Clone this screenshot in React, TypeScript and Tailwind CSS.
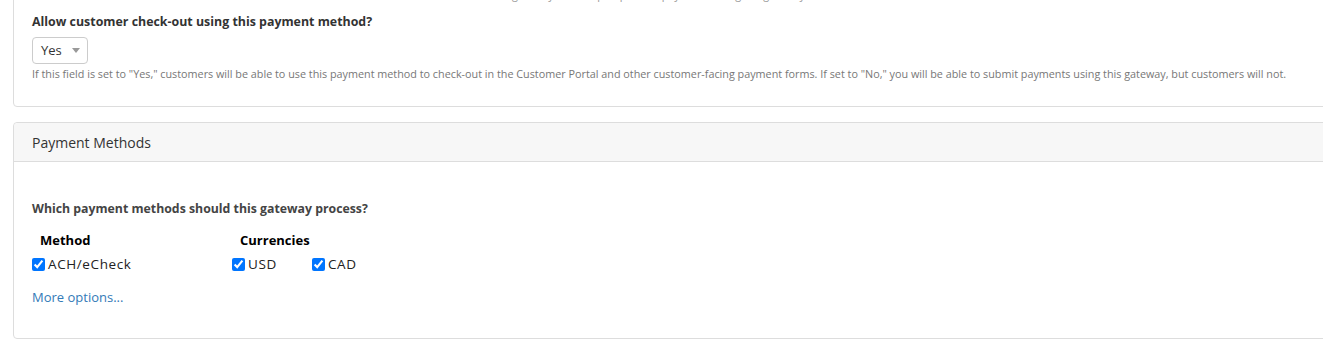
import React from "react";

export default function App() {
  return (
    <div
      className="w-[1323px] h-[339px] overflow-hidden bg-white text-[#333]"
      style={{ fontFamily: "'Open Sans', Lato, sans-serif" }}
    >
      <div className="ml-[13px] w-[1330px]">
        {/* Panel 1 */}
        <div className="-mt-[20px] border border-[#ddd] rounded-[4px] pl-[18px] pb-[25px]">
          <div className="h-[33px] pt-[8px] text-[10.8px] text-[#999] leading-[12px] pl-[480px] whitespace-nowrap">
            gateway are setup to process payments using the gateway
          </div>
          <div className="text-[12.4px] font-bold leading-[16px] text-[#333]">
            Allow customer check-out using this payment method?
          </div>
          <div className="mt-[7px] flex items-center justify-between w-[56px] h-[27px] border border-[#ccc] rounded-[4px] pl-[8px] pr-[7px] text-[13px] text-[#333]">
            <span>Yes</span>
            <span className="w-0 h-0 border-l-[4px] border-r-[4px] border-t-[5px] border-l-transparent border-r-transparent border-t-[#999]" />
          </div>
          <div className="mt-[3px] text-[10.8px] leading-[14px] text-[#777] whitespace-nowrap">
            If this field is set to "Yes," customers will be able to use this payment method to check-out in the Customer Portal and other customer-facing payment forms. If set to "No," you will be able to submit payments using this gateway, but customers will not.
          </div>
        </div>

        {/* Panel 2 */}
        <div className="mt-[15px] border border-[#ddd] rounded-[4px] h-[217px]">
          <div className="h-[39px] bg-[#f7f7f7] border-b border-[#ddd] rounded-t-[4px] pl-[18px] flex items-center text-[14px] text-[#333]">
            Payment Methods
          </div>
          <div className="pl-[18px] pt-[39px]">
            <div className="text-[12.3px] font-bold leading-[16px] text-[#444]">
              Which payment methods should this gateway process?
            </div>
            <div className="mt-[15px] flex">
              <div className="w-[200px]">
                <div className="pl-[8px] text-[13px] font-bold text-black leading-[16px]">Method</div>
                <label className="mt-[8px] flex items-center text-[13.5px] tracking-[0.6px] text-[#222] leading-[16px]">
                  <input type="checkbox" defaultChecked className="m-0 mr-[3px] w-[13px] h-[13px]" />
                  ACH/eCheck
                </label>
              </div>
              <div>
                <div className="pl-[8px] text-[13px] font-bold text-black leading-[16px]">Currencies</div>
                <div className="mt-[8px] flex">
                  <label className="w-[80px] flex items-center text-[13.5px] tracking-[0.6px] text-[#222] leading-[16px]">
                    <input type="checkbox" defaultChecked className="m-0 mr-[3px] w-[13px] h-[13px]" />
                    USD
                  </label>
                  <label className="flex items-center text-[13.5px] tracking-[0.6px] text-[#222] leading-[16px]">
                    <input type="checkbox" defaultChecked className="m-0 mr-[3px] w-[13px] h-[13px]" />
                    CAD
                  </label>
                </div>
              </div>
            </div>
            <div className="mt-[17px] text-[13px] text-[#337ab7] leading-[16px]">More options...</div>
          </div>
        </div>
      </div>
    </div>
  );
}
